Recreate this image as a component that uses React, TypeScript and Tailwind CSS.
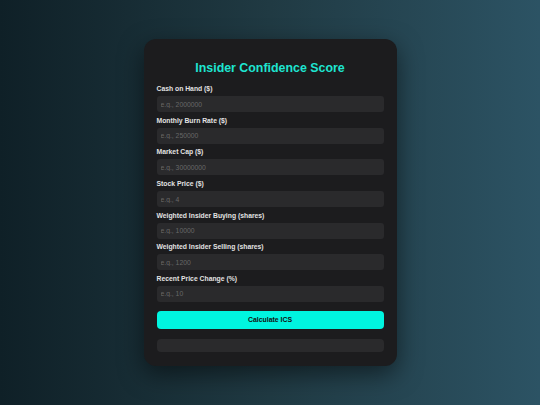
import React from "react";

const fields = [
  { label: "Cash on Hand ($)", ph: "e.g., 2000000" },
  { label: "Monthly Burn Rate ($)", ph: "e.g., 250000" },
  { label: "Market Cap ($)", ph: "e.g., 30000000" },
  { label: "Stock Price ($)", ph: "e.g., 4" },
  { label: "Weighted Insider Buying (shares)", ph: "e.g., 10000" },
  { label: "Weighted Insider Selling (shares)", ph: "e.g., 1200" },
  { label: "Recent Price Change (%)", ph: "e.g., 10" },
];

export default function App() {
  return (
    <div
      className="min-h-screen w-full flex items-center justify-center bg-gradient-to-r from-[#0f2027] via-[#203a43] to-[#2c5364]"
      style={{ fontFamily: "'Liberation Sans', Arial, sans-serif" }}
    >
      <div className="w-[253px] flex flex-col bg-[#1c1c1e] rounded-[12px] px-[13px] pt-[21px] pb-[13.5px] shadow-[0_8px_24px_rgba(0,0,0,0.5)]">
        <h1 className="text-center text-[12.4px] leading-[16px] font-bold text-[#1ee5d1] mb-[9px]">
          Insider Confidence Score
        </h1>
        {fields.map((f) => (
          <div key={f.label} className="mb-[4.6px]">
            <label className="block text-[6.8px] leading-[8px] font-bold text-[#e2e2e2] mb-[3px]">
              {f.label}
            </label>
            <input
              type="number"
              placeholder={f.ph}
              className="block w-full h-[16px] rounded-[3px] bg-[#2a2a2c] px-[4px] text-[6.8px] text-[#ddd] placeholder:text-[#686868] outline-none border-0"
            />
          </div>
        ))}
        <button className="mt-[4.4px] w-full h-[18px] rounded-[4px] bg-[#00f5e0] text-[6.9px] font-bold text-[#111] flex items-center justify-center">
          Calculate ICS
        </button>
        <div className="mt-[10px] w-full h-[13.5px] rounded-[4px] bg-[#2a2a2c]" />
      </div>
    </div>
  );
}
